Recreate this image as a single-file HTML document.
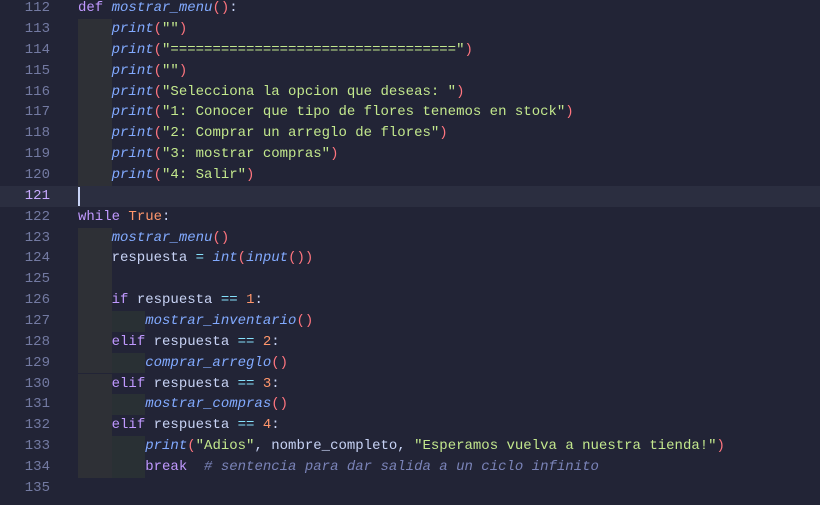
<!DOCTYPE html><html><head><style>
body{margin:0;width:820px;height:505px;background:#222436;overflow:hidden;font-family:"Liberation Mono",monospace;font-size:14px;color:#c8d3f5}
.r{position:absolute;left:0;width:820px;height:20.85px;line-height:20.85px;white-space:pre}
.n{position:absolute;left:0;width:50px;text-align:right;color:#737aa2}
.c{position:absolute;left:78px}
.g1,.g2{position:absolute;height:20.85px;width:33.6px}
.g1{left:78px;background:#2e3036}
.g2{left:111.6px;background:#293034}
.k{color:#c099ff}.f{color:#82aaff;font-style:italic}.s{color:#c3e88d}.p{color:#ff757f}.o{color:#86e1fc}.m{color:#ff966c}.cm{color:#7a83b8;font-style:italic}
</style></head><body>
<div id="w"></div>
<script>
const L=[
[0,'<span class="k">def</span> <span class="f">mostrar_menu</span><span class="p">()</span>:'],
[1,'    <span class="f">print</span><span class="p">(</span><span class="s">""</span><span class="p">)</span>'],
[1,'    <span class="f">print</span><span class="p">(</span><span class="s">"=================================="</span><span class="p">)</span>'],
[1,'    <span class="f">print</span><span class="p">(</span><span class="s">""</span><span class="p">)</span>'],
[1,'    <span class="f">print</span><span class="p">(</span><span class="s">"Selecciona la opcion que deseas: "</span><span class="p">)</span>'],
[1,'    <span class="f">print</span><span class="p">(</span><span class="s">"1: Conocer que tipo de flores tenemos en stock"</span><span class="p">)</span>'],
[1,'    <span class="f">print</span><span class="p">(</span><span class="s">"2: Comprar un arreglo de flores"</span><span class="p">)</span>'],
[1,'    <span class="f">print</span><span class="p">(</span><span class="s">"3: mostrar compras"</span><span class="p">)</span>'],
[1,'    <span class="f">print</span><span class="p">(</span><span class="s">"4: Salir"</span><span class="p">)</span>'],
[0,''],
[0,'<span class="k">while</span> <span class="m">True</span>:'],
[1,'    <span class="f">mostrar_menu</span><span class="p">()</span>'],
[1,'    respuesta <span class="o">=</span> <span class="f">int</span><span class="p">(</span><span class="f">input</span><span class="p">())</span>'],
[1,''],
[1,'    <span class="k">if</span> respuesta <span class="o">==</span> <span class="m">1</span>:'],
[2,'        <span class="f">mostrar_inventario</span><span class="p">()</span>'],
[1,'    <span class="k">elif</span> respuesta <span class="o">==</span> <span class="m">2</span>:'],
[2,'        <span class="f">comprar_arreglo</span><span class="p">()</span>'],
[1,'    <span class="k">elif</span> respuesta <span class="o">==</span> <span class="m">3</span>:'],
[2,'        <span class="f">mostrar_compras</span><span class="p">()</span>'],
[1,'    <span class="k">elif</span> respuesta <span class="o">==</span> <span class="m">4</span>:'],
[2,'        <span class="f">print</span><span class="p">(</span><span class="s">"Adios"</span>, nombre_completo, <span class="s">"Esperamos vuelva a nuestra tienda!"</span><span class="p">)</span>'],
[2,'        <span class="k">break</span>  <span class="cm"># sentencia para dar salida a un ciclo infinito</span>'],
[0,'']];
let h='';L.forEach((l,i)=>{const t=(-1.8+i*20.85).toFixed(2);const cur=i==9;
h+=`<div class="r" style="top:${t}px;${cur?'background:#2b2e40':''}">`+(l[0]>=1?'<div class="g1"></div>':'')+(l[0]>=2?'<div class="g2"></div>':'')+`<span class="n" style="${cur?'color:#c7a9ff':''}">${112+i}</span><span class="c">${l[1]}</span>`+(cur?'<div style="position:absolute;left:78px;top:1px;width:2px;height:19px;background:#c8d3f5"></div>':'')+'</div>';});
document.getElementById('w').innerHTML=h;
</script></body></html>
